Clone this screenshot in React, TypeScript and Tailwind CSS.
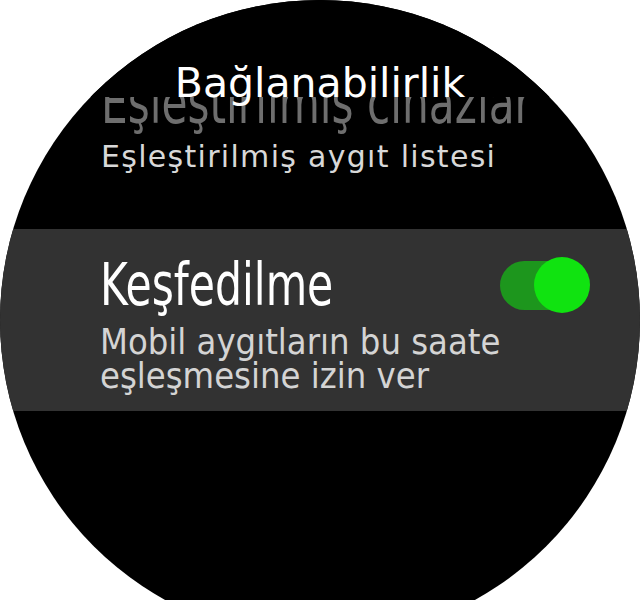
export default function App() {
  return (
    <div className="w-[640px] h-[600px] bg-white overflow-hidden flex justify-center">
      <div className="relative shrink-0 w-[640px] h-[640px] rounded-full bg-black overflow-hidden">
        {/* fixed header over the scrolling list */}
        <div className="absolute inset-x-0 top-0 z-10 h-[97px] bg-black">
          <h1 className="pt-[63px] text-center text-[41px] leading-[40px] text-white font-['DejaVu_Sans',sans-serif]">
            Bağlanabilirlik
          </h1>
        </div>

        <div className="flex flex-col">
          <div className="pl-[101px] pt-[74px]">
            <p className="origin-left scale-x-[0.81] text-[58px] leading-[58px] text-[#6e6e6e] whitespace-nowrap font-['DejaVu_Sans_Condensed',sans-serif]">
              Eşleştirilmiş cihazlar
            </p>
            <p className="mt-[10px] text-[30px] leading-[30px] tracking-[1.3px] text-[#d8d8d8] whitespace-nowrap font-['DejaVu_Sans',sans-serif]">
              Eşleştirilmiş aygıt listesi
            </p>
          </div>

          <div className="mt-[57px] bg-[#323232] pl-[100px] pr-[50px] pt-[27px] pb-[18px]">
            <div className="flex items-center justify-between">
              <p className="origin-left scale-x-[0.815] text-[58px] leading-[58px] text-white whitespace-nowrap font-['DejaVu_Sans_Condensed',sans-serif]">
                Keşfedilme
              </p>
              <div className="relative w-[90px] h-[56px]">
                <div className="absolute left-0 top-[4px] h-[49px] w-[80px] rounded-full bg-[#1d961d]" />
                <div className="absolute right-0 top-0 h-[56px] w-[56px] rounded-full bg-[#10e310]" />
              </div>
            </div>
            <p className="mt-[11px] text-[36px] leading-[34px] text-[#d4d4d4] font-['DejaVu_Sans_Condensed',sans-serif]">
              Mobil aygıtların bu saate
              <br />
              eşleşmesine izin ver
            </p>
          </div>
        </div>
      </div>
    </div>
  );
}
